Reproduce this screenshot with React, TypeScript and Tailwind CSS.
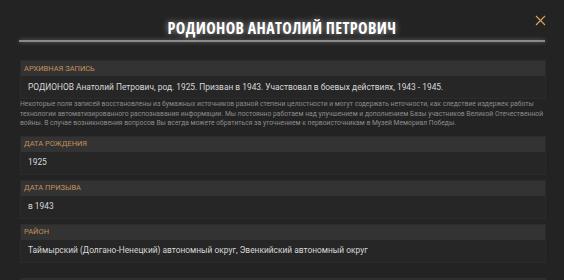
import React from 'react';

interface FieldProps {
  label: string;
  value: string;
}

const Field: React.FC<FieldProps> = ({ label, value }) => {
  return (
    <div className="border border-[#2c2c2c] bg-[#262626]">
      <div className="flex h-[15px] items-center bg-[#333333] pl-[3px] text-[7.5px] uppercase text-[#c4905a]">
        {label}
      </div>
      <div className="flex h-[22px] items-center pl-[7px] text-[8.4px] text-[#d8d8d8]">{value}</div>
    </div>
  );
};

const App: React.FC = () => {
  return (
    <div className="h-[280px] w-[564px] overflow-hidden bg-[#232323] font-['Roboto',sans-serif]">
      <div className="relative pt-[18px]">
        <h1 className="text-center font-['Open_Sans',sans-serif] text-[16px] font-bold leading-[20px] tracking-[0.4px] text-white [font-stretch:80%] [text-shadow:0_0_6px_rgba(255,255,255,0.6)]">
          РОДИОНОВ АНАТОЛИЙ ПЕТРОВИЧ
        </h1>
        <button className="absolute right-[18px] top-[15px] text-[#d9a45c]">
          <svg width="11" height="11" viewBox="0 0 11 11" fill="none" stroke="currentColor" strokeWidth="1.1">
            <path d="M1 1l9 9M10 1l-9 9" />
          </svg>
        </button>
      </div>
      <div className="mx-[19px] mt-[2px] h-[2px] bg-[#8a8a8a] shadow-[0_0_4px_rgba(255,255,255,0.35)]" />

      <div className="flex flex-col pl-[20px] pr-[18px] pt-[18px]">
        <Field
          label="Архивная запись"
          value="РОДИОНОВ Анатолий Петрович, род. 1925. Призван в 1943. Участвовал в боевых действиях, 1943 - 1945."
        />
        <p className="mt-[1px] text-[6.75px] leading-[9.5px] text-[#8c8c8c]">
          Некоторые поля записей восстановлены из бумажных источников разной степени целостности и могут содержать неточности, как следствие издержек работы технологии автоматизированного распознавания информации. Мы постоянно работаем над улучшением и дополнением Базы участников Великой Отечественной войны. В случае возникновения вопросов Вы всегда можете обратиться за уточнением к первоисточникам в Музей Мемориал Победы.
        </p>
        <div className="mt-[7px] flex flex-col gap-[5px]">
          <Field label="Дата рождения" value="1925" />
          <Field label="Дата призыва" value="в 1943" />
          <Field label="Район" value="Таймырский (Долгано-Ненецкий) автономный округ, Эвенкийский автономный округ" />
          <div className="mt-[10px] h-[15px] bg-[#2e2e2e]" />
        </div>
      </div>
    </div>
  );
};

export default App;
